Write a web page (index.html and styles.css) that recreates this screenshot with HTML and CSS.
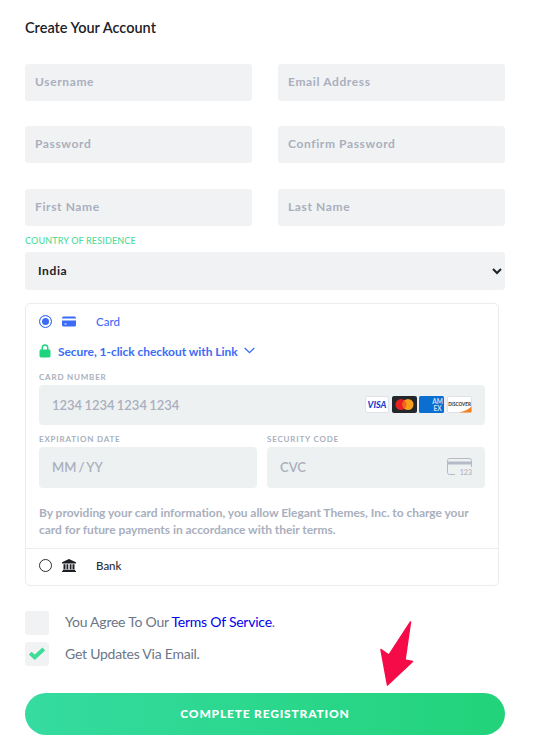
FILE: index.html
```html
<!DOCTYPE html>
<html>
<head>
    <link rel="stylesheet" href="styles.css">
</head>
<body>
    <form class="signup">
        <h1 class="title">Create Your Account</h1>

        <div class="fields">
            <input class="field" type="text" placeholder="Username">
            <input class="field" type="text" placeholder="Email Address">
            <input class="field" type="password" placeholder="Password">
            <input class="field" type="password" placeholder="Confirm Password">
            <input class="field" type="text" placeholder="First Name">
            <input class="field" type="text" placeholder="Last Name">
        </div>

        <label class="country-label" for="country">Country of Residence</label>
        <select class="country" id="country">
            <option>India</option>
        </select>

        <div class="payment">
            <div class="method method-card">
                <span class="radio radio-on"></span>
                <svg class="method-icon" width="14" height="11" viewBox="0 0 14 11">
                    <path fill="#3b6cf5" d="M0 2a1.5 1.5 0 0 1 1.5-1.5h11A1.5 1.5 0 0 1 14 2v.6H0zM0 4.400h14V9a1.500 1.500 0 0 1-1.500 1.500h-11A1.500 1.500 0 0 1 0 9zM2.500 7.600v1h2v-1z"/>
                </svg>
                <span class="method-name">Card</span>
            </div>

            <div class="card-details">
                <div class="secure">
                    <svg width="12" height="14" viewBox="0 0 12 14">
                        <path fill="#1fd37f" d="M2.500 5.500V3.700a3.500 3.500 0 0 1 7 0v1.800h.6c.8 0 1.400.6 1.400 1.400v5.200c0 .8-.6 1.400-1.400 1.400H1.900c-.8 0-1.400-.6-1.400-1.400V6.900c0-.8.6-1.400 1.400-1.400zm1.500 0h4V3.700a2 2 0 0 0-4 0z"/>
                    </svg>
                    <span>Secure, 1-click checkout with Link</span>
                    <svg width="11" height="7" viewBox="0 0 11 7">
                        <path fill="none" stroke="#3b6cf5" stroke-width="1.300" d="M.7 1l4.800 4.700L10.300 1"/>
                    </svg>
                </div>

                <div class="card-label">Card Number</div>
                <div class="card-input">
                    <span>1234 1234 1234 1234</span>
                    <div class="brands">
                        <svg width="24" height="17" viewBox="0 0 24 17">
                            <rect x=".5" y=".5" width="23" height="16" rx="1.500" fill="#fff" stroke="#dfe3e8"/>
                            <text class="visa" x="12" y="12" text-anchor="middle">VISA</text>
                        </svg>
                        <svg width="25" height="17" viewBox="0 0 25 17">
                            <rect width="25" height="17" rx="2" fill="#23262b"/>
                            <circle cx="9" cy="8.500" r="5.500" fill="#e5201f"/>
                            <circle cx="16" cy="8.500" r="5.500" fill="#f79e1b"/>
                            <path fill="#f2641d" d="M12.500 4.300a5.500 5.500 0 0 1 0 8.400 5.500 5.500 0 0 1 0-8.400z"/>
                        </svg>
                        <svg width="25" height="17" viewBox="0 0 25 17">
                            <rect width="25" height="17" rx="1.500" fill="#0a6fd1"/>
                            <text class="amex" x="18.500" y="8" text-anchor="middle">AM</text>
                            <text class="amex" x="18.500" y="15" text-anchor="middle">EX</text>
                        </svg>
                        <svg width="25" height="17" viewBox="0 0 25 17">
                            <rect x=".5" y=".5" width="24" height="16" rx="1.500" fill="#fff" stroke="#dfe3e8"/>
                            <path fill="#f58220" d="M12 16.500c5-1 9.500-3.300 12.500-6v5a1 1 0 0 1-1 1z"/>
                            <text class="discover" x="12.500" y="10" text-anchor="middle">DISCOVER</text>
                        </svg>
                    </div>
                </div>

                <div class="card-row">
                    <div>
                        <div class="card-label">Expiration Date</div>
                        <div class="card-input card-input-short"><span>MM / YY</span></div>
                    </div>
                    <div>
                        <div class="card-label">Security Code</div>
                        <div class="card-input card-input-short">
                            <span>CVC</span>
                            <svg width="25" height="18" viewBox="0 0 25 18">
                                <path fill="none" stroke="#b4bac6" d="M8 16.500H2.500a2 2 0 0 1-2-2v-12a2 2 0 0 1 2-2h20a2 2 0 0 1 2 2V9"/>
                                <rect x="0" y="3.500" width="25" height="3" fill="#b4bac6"/>
                                <text class="cvc-digits" x="25" y="17" text-anchor="end">123</text>
                            </svg>
                        </div>
                    </div>
                </div>

                <p class="card-note">By providing your card information, you allow Elegant Themes, Inc. to charge your card for future payments in accordance with their terms.</p>
            </div>

            <div class="method method-bank">
                <span class="radio"></span>
                <svg class="method-icon" width="14" height="13" viewBox="0 0 14 13">
                    <path fill="#1b1e24" d="M7 0l7 3.300V4.500H0V3.300zM1.500 5.300h2v4.900h-2zM4.500 5.300h1.800v4.900H4.500zM7.700 5.300h1.800v4.900H7.700zM10.500 5.300h2v4.900h-2zM.8 10.800h12.400V12H.8zM0 12h14v1H0z"/>
                </svg>
                <span class="method-name">Bank</span>
            </div>
        </div>

        <div class="agree">
            <span class="box"></span>
            <span class="agree-text">You Agree To Our <a class="terms" href="#">Terms Of Service</a>.</span>
        </div>
        <div class="agree agree-second">
            <span class="box">
                <svg width="16" height="13" viewBox="0 0 16 13">
                    <path fill="none" stroke="#3ddc97" stroke-width="4" d="M1.200 6.200l4.600 4L14.800 2"/>
                </svg>
            </span>
            <span class="agree-text">Get Updates Via Email.</span>
        </div>

        <button class="submit" type="button">Complete Registration</button>

        <svg class="arrow" width="34" height="66" viewBox="0 0 34 66">
            <path fill="#f40b47" stroke="#f40b47" stroke-width="1.500" stroke-linejoin="round" d="M30.500 1L25 39l7.500 1.500L7.500 64 1 28.500 9 34z"/>
        </svg>
    </form>
</body>
</html>
```

FILE: styles.css
```css
* {
    box-sizing: border-box;
}

body {
    margin: 0;
    font-family: Lato, sans-serif;
    background-color: white;
}

.signup {
    position: relative;
    width: 480px;
    margin-left: 25px;
    padding-top: 19px;
}

.title {
    margin: 0 0 28px;
    font-size: 14.500px;
    line-height: 17px;
    font-weight: 600;
    color: #1d2129;
}

.fields {
    display: grid;
    grid-template-columns: 227px 227px;
    column-gap: 26px;
    row-gap: 25.400px;
}

.field {
    width: 100%;
    height: 37px;
    padding: 0 10px 2px;
    border: none;
    border-radius: 3px;
    background-color: #f1f2f4;
    font-family: Lato, sans-serif;
    font-size: 12px;
    font-weight: 700;
    letter-spacing: 0.62px;
}

.field::placeholder {
    color: #a9afbd;
    opacity: 1;
}

.country-label {
    display: block;
    margin-top: 9.200px;
    font-size: 9px;
    line-height: 11px;
    font-weight: 500;
    letter-spacing: 0.15px;
    text-transform: uppercase;
    color: #4fdc9c;
}

.country {
    display: block;
    width: 480px;
    height: 38px;
    margin-top: 6px;
    padding: 0 9px;
    border: none;
    border-radius: 3px;
    background-color: #f1f2f4;
    font-family: Lato, sans-serif;
    font-size: 12px;
    font-weight: 700;
    letter-spacing: 0.62px;
    color: #1d2129;
}

.payment {
    width: 474px;
    margin-top: 13px;
    border: 1px solid #eaecef;
    border-radius: 5px;
}

.method {
    display: flex;
    align-items: center;
    padding-left: 13px;
    font-size: 11.500px;
    font-weight: 500;
}

.method-card {
    height: 36px;
    color: #3b6cf5;
}

.method-bank {
    height: 37px;
    padding-bottom: 2px;
    border-top: 1px solid #eaecef;
    color: #2a2e35;
}

.radio {
    width: 13px;
    height: 13px;
    border: 1.500px solid #2a2e35;
    border-radius: 50%;
}

.radio-on {
    border-color: #3b6cf5;
    background-color: #3b6cf5;
    box-shadow: inset 0 0 0 2px white;
}

.method-icon {
    margin-left: 10px;
}

.method-name {
    margin-left: 20px;
}

.card-details {
    padding: 0 13px;
}

.secure {
    display: flex;
    align-items: center;
    height: 16px;
    margin-top: 3px;
    font-size: 12px;
    font-weight: 700;
    letter-spacing: -0.05px;
    color: #3b6cf5;
}

.secure span {
    margin: 1px 6px 0 7px;
}

.card-label {
    margin-top: 13px;
    font-size: 8px;
    line-height: 10px;
    font-weight: 700;
    letter-spacing: 0.8px;
    text-transform: uppercase;
    color: #a9afbd;
}

.card-input {
    display: flex;
    align-items: center;
    justify-content: space-between;
    height: 40px;
    margin-top: 3px;
    padding: 0 13px;
    border-radius: 4px;
    background-color: #eef1f2;
    font-size: 13px;
    font-weight: 600;
    word-spacing: -1px;
    color: #a9afbd;
}

.card-input-short {
    height: 41px;
}

.brands {
    display: flex;
    gap: 2.700px;
}

.visa {
    font: italic 900 9px Lato, sans-serif;
    fill: #1a3fd0;
}

.amex {
    font: 700 6.500px Lato, sans-serif;
    fill: #cfe3f8;
}

.discover {
    font: 700 4.600px Lato, sans-serif;
    fill: #333;
}

.cvc-digits {
    font: 700 7px Lato, sans-serif;
    fill: #b4bac6;
    stroke: #eef1f2;
    stroke-width: 2px;
    paint-order: stroke;
}

.card-row {
    display: grid;
    grid-template-columns: 218px 218px;
    column-gap: 10px;
}

.card-row .card-label {
    margin-top: 9px;
}

.card-note {
    margin: 16px 0 0;
    padding-bottom: 10px;
    font-size: 12px;
    line-height: 17px;
    font-weight: 700;
    letter-spacing: -0.04px;
    color: #a9afbd;
}

.agree {
    display: flex;
    align-items: center;
    gap: 16px;
    margin-top: 25px;
    font-size: 14px;
    letter-spacing: -0.24px;
    color: #6b7687;
}

.agree-second {
    margin-top: 7px;
}

.agree-text {
    margin-bottom: 2px;
}

.agree-second .agree-text {
    margin-bottom: 0;
}

.box {
    display: flex;
    align-items: center;
    justify-content: center;
    width: 24px;
    height: 24px;
    border-radius: 3px;
    background-color: #f1f2f4;
}

.terms {
    color: #0000ee;
    text-decoration: none;
}

.submit {
    display: block;
    width: 480px;
    height: 42px;
    margin-top: 27px;
    border: none;
    border-radius: 21px;
    background: linear-gradient(90deg, #35dba0, #22d37a);
    font-family: Lato, sans-serif;
    font-size: 12px;
    font-weight: 900;
    letter-spacing: 0.8px;
    text-transform: uppercase;
    color: white;
}

.arrow {
    position: absolute;
    left: 355px;
    top: 621px;
}
```
